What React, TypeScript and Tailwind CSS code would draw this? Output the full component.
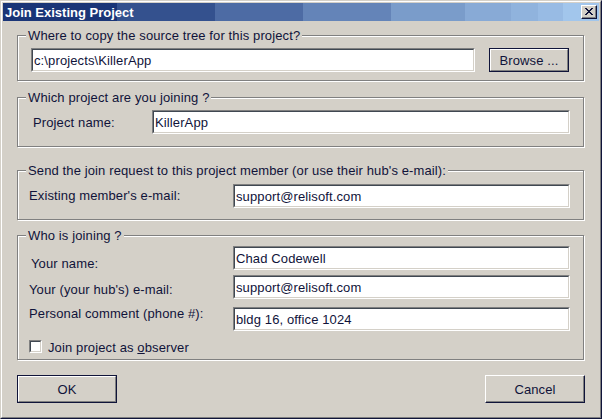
import React from 'react';

type BoxProps = { value: string; className: string };

// sunken edit control, Win2000 style
const TextBox: React.FC<BoxProps> = ({ value, className }) => (
    <div className={`h-[24px] shrink-0 border border-t-[#808080] border-l-[#808080] border-r-white border-b-white ${className}`}>
        <input
            readOnly
            value={value}
            className="block h-full w-full border border-t-[#404852] border-l-[#404852] border-r-[#d4d0c8] border-b-[#d4d0c8] bg-white px-[1px] text-[13px] leading-[15px] tracking-[0.12px] text-[#10133a] outline-none font-['Liberation_Sans',Arial,sans-serif]"
        />
    </div>
);

type ButtonProps = { label: string; isDefault?: boolean; className: string };

const PushButton: React.FC<ButtonProps> = ({ label, isDefault, className }) => {
    if (isDefault) {
        return (
            <div className={`shrink-0 border border-[#10143a] ${className}`}>
                <button className="flex h-full w-full items-center justify-center border border-t-white border-l-white border-r-[#808080] border-b-[#808080] bg-[#d4d0c8] text-[13px] leading-[15px] tracking-[0.12px] text-[#10133a]">
                    {label}
                </button>
            </div>
        );
    }
    return (
        <button
            className={`flex shrink-0 items-center justify-center border border-t-white border-l-white border-r-[#10143a] border-b-[#10143a] bg-[#d4d0c8] text-[13px] leading-[15px] tracking-[0.12px] text-[#10133a] shadow-[inset_-1px_-1px_0_#808080] ${className}`}
        >
            {label}
        </button>
    );
};

type GroupProps = { title: string; className: string; children: React.ReactNode };

// etched group box with its caption sitting on the top line
const Group: React.FC<GroupProps> = ({ title, className, children }) => (
    <div className={`relative w-[567px] border border-[#808080] shadow-[inset_1px_1px_0_#fff,1px_1px_0_#fff] ${className}`}>
        <span className="absolute -top-[8px] left-[8px] whitespace-nowrap bg-[#d4d0c8] px-[2px] leading-[15px]">
            {title}
        </span>
        {children}
    </div>
);

export default function App() {
    return (
        <div className="h-[419px] w-[602px] border border-t-[#d4d0c8] border-l-[#d4d0c8] border-r-[#10143a] border-b-[#10143a] bg-[#d4d0c8] font-['Liberation_Sans',Arial,sans-serif] text-[13px] leading-[15px] tracking-[0.12px] text-[#10133a]">
            <div className="h-full border border-t-white border-l-white border-r-[#808080] border-b-[#808080] p-px">
                {/* caption bar */}
                <div className="flex h-[18px] items-center justify-between bg-[linear-gradient(to_right,#1a3577_0px,#1a3577_114px,#34518e_114px,#34518e_212px,#4d6ba4_212px,#4d6ba4_300px,#6484b8_300px,#6484b8_388px,#7a9cca_388px,#7a9cca_462px,#88aad6_462px,#88aad6_508px,#90b3dd_508px,#90b3dd_535px,#98bbe4_535px,#98bbe4_560px,#a2c6ec_560px,#a2c6ec_100%)] pl-[2px]">
                    <span className="text-[13px] font-bold leading-[15px] tracking-normal text-white">Join Existing Project</span>
                    <div className="mr-[2px] h-[14px] w-[16px] border border-t-white border-l-white border-r-[#10143a] border-b-[#10143a] bg-[#d4d0c8] shadow-[inset_-1px_-1px_0_#808080]">
                        <svg width="8" height="7" viewBox="0 0 8 7" className="ml-[3px] mt-[2px] block" shapeRendering="crispEdges">
                            <path
                                fill="#10143a"
                                d="M0 0h2v1H0z M6 0h2v1H6z M1 1h2v1H1z M5 1h2v1H5z M2 2h4v1H2z M3 3h2v1H3z M2 4h4v1H2z M1 5h2v1H1z M5 5h2v1H5z M0 6h2v1H0z M6 6h2v1H6z"
                            />
                        </svg>
                    </div>
                </div>

                <div className="pl-[14px]">
                    <Group title="Where to copy the source tree for this project?" className="mt-[14px]">
                        <div className="flex pt-[12px] pb-[8px] pl-[13px]">
                            <TextBox value="c:\projects\KillerApp" className="w-[444px]" />
                            <PushButton label="Browse ..." isDefault className="ml-[14px] h-[24px] w-[80px]" />
                        </div>
                    </Group>

                    <Group title="Which project are you joining ?" className="mt-[16px]">
                        <div className="flex items-center pt-[12px] pb-[12px] pl-[15px]">
                            <span className="w-[119px] shrink-0">Project name:</span>
                            <TextBox value="KillerApp" className="w-[418px]" />
                        </div>
                    </Group>

                    <Group title="Send the join request to this project member (or use their hub's e-mail):" className="mt-[23px]">
                        <div className="flex items-start pt-[13px] pb-[11px] pl-[11px]">
                            <span className="w-[204px] shrink-0 pt-[4px]">Existing member's e-mail:</span>
                            <TextBox value="support@relisoft.com" className="w-[337px]" />
                        </div>
                    </Group>

                    <Group title="Who is joining ?" className="mt-[15px]">
                        <div className="flex flex-col pt-[10px] pb-[6px] pl-[11px]">
                            <div className="flex items-start">
                                <span className="w-[204px] shrink-0 pt-[10px] pl-[2px]">Your name:</span>
                                <TextBox value="Chad Codewell" className="w-[337px]" />
                            </div>
                            <div className="mt-[4px] flex items-start">
                                <span className="w-[204px] shrink-0 pt-[7px]">Your (your hub's) e-mail:</span>
                                <TextBox value="support@relisoft.com" className="w-[337px]" />
                            </div>
                            <div className="mt-[8px] flex items-start">
                                <span className="-mt-[1px] w-[204px] shrink-0">Personal comment (phone #):</span>
                                <TextBox value="bldg 16, office 1024" className="w-[337px]" />
                            </div>
                            <div className="mt-[9px] flex h-[13px] items-start">
                                <div className="h-[13px] w-[13px] shrink-0 border border-t-[#808080] border-l-[#808080] border-r-white border-b-white">
                                    <div className="h-full w-full border border-t-[#404852] border-l-[#404852] border-r-[#d4d0c8] border-b-[#d4d0c8] bg-white" />
                                </div>
                                <span className="ml-[6px] whitespace-nowrap">
                                    Join project as <u>o</u>bserver
                                </span>
                            </div>
                        </div>
                    </Group>

                    <div className="mt-[15px] flex w-[568px] justify-between">
                        <PushButton label="OK" isDefault className="h-[28px] w-[100px]" />
                        <PushButton label="Cancel" className="h-[28px] w-[100px]" />
                    </div>
                </div>
            </div>
        </div>
    );
}
